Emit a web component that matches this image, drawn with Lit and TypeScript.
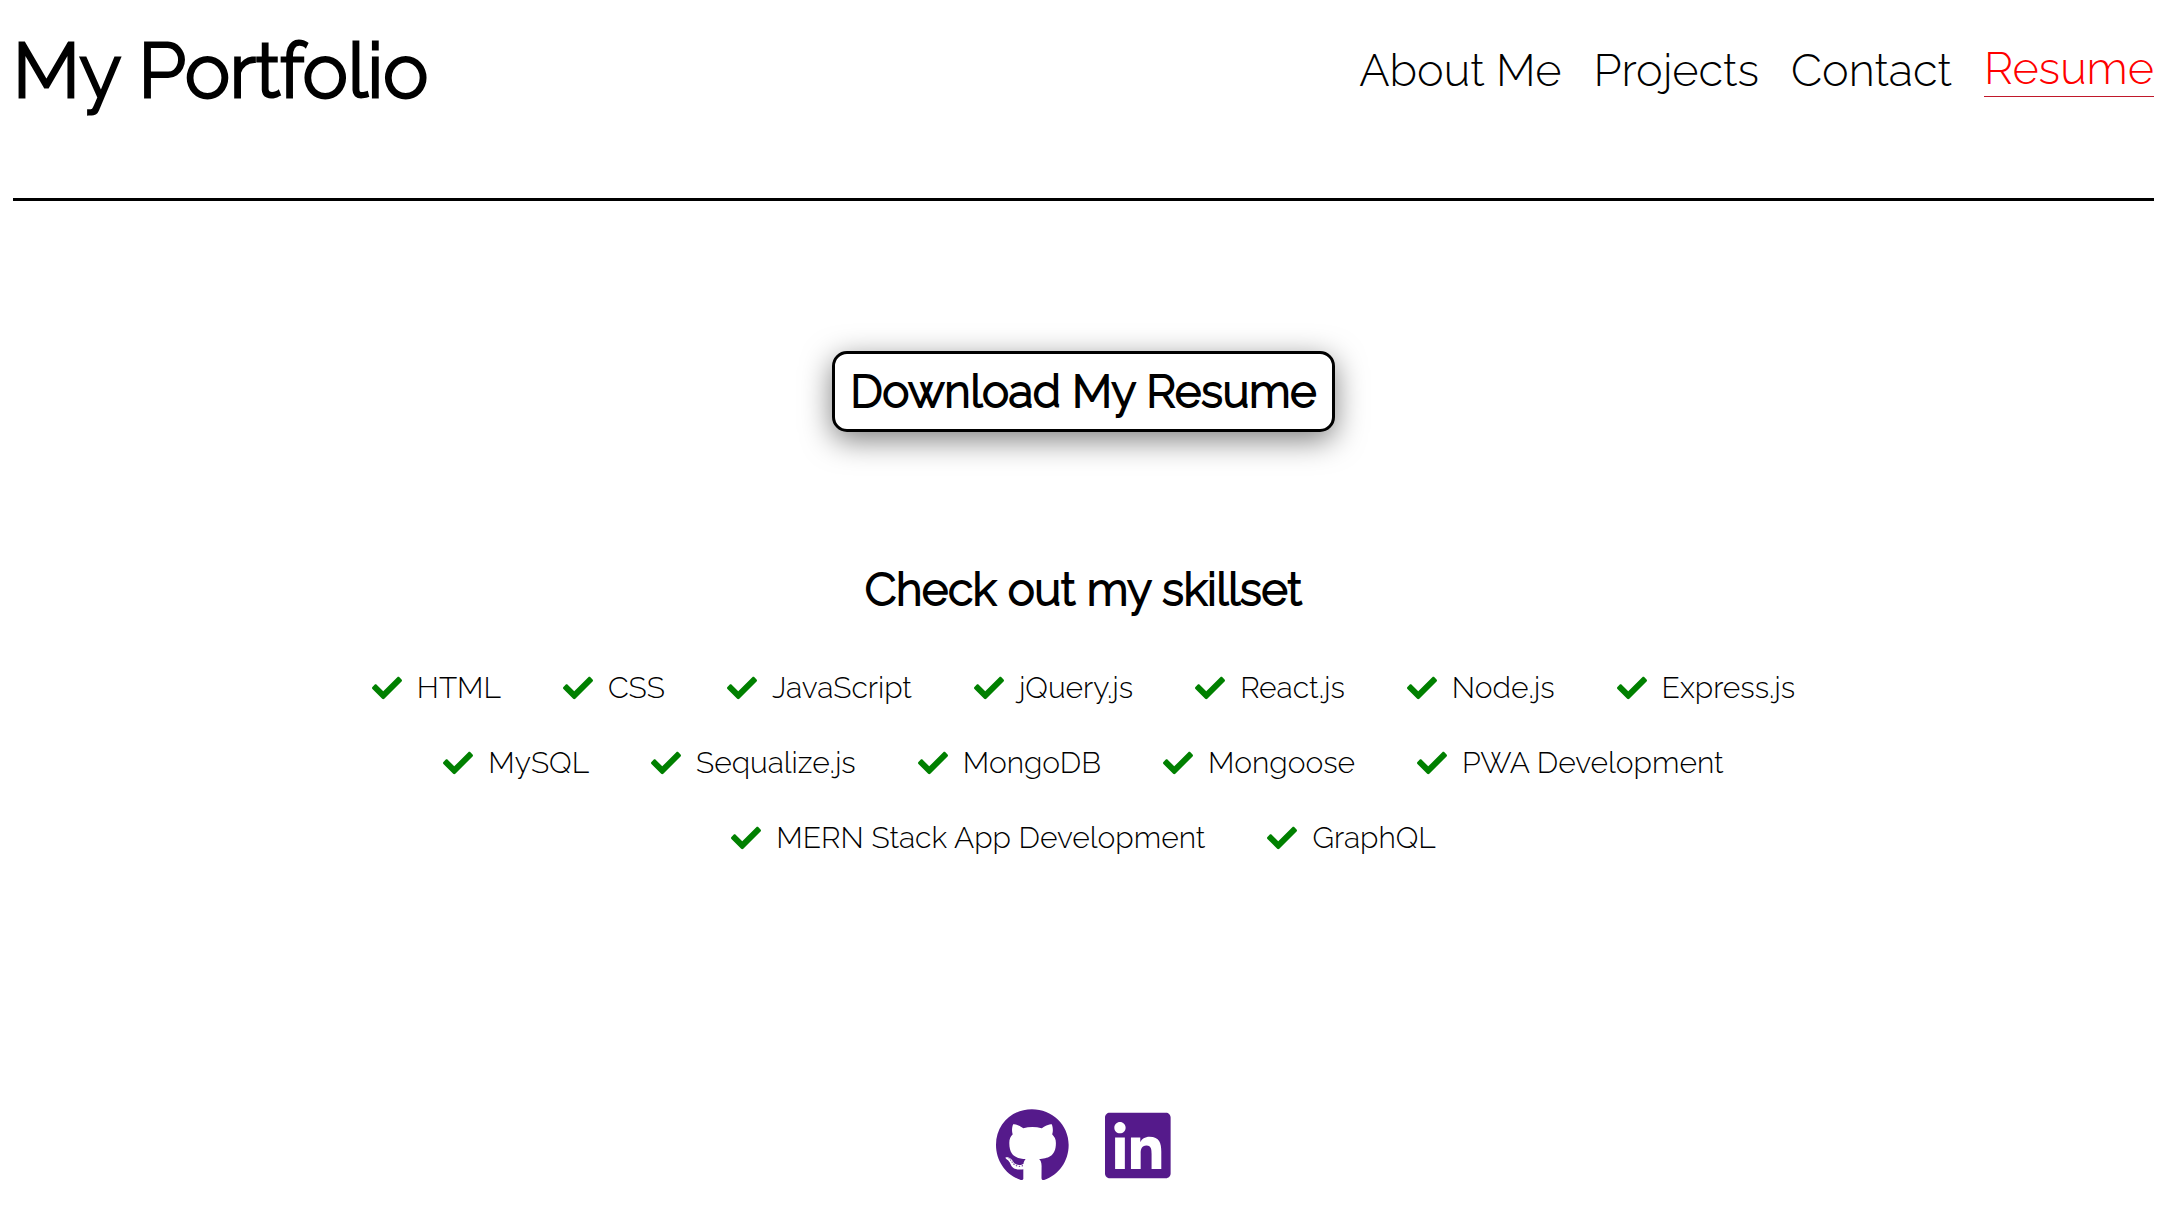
import { LitElement, html, css, svg } from "lit";
import { customElement } from "lit/decorators.js";

const CHECK = svg`<path d="M173.898 439.404l-166.4-166.4c-9.997-9.997-9.997-26.206 0-36.204l36.203-36.204c9.997-9.998 26.207-9.998 36.204 0L192 312.69 432.095 72.596c9.997-9.997 26.207-9.997 36.204 0l36.203 36.204c9.997 9.997 9.997 26.206 0 36.204l-294.4 294.401c-9.998 9.997-26.207 9.997-36.204-.001z"/>`;

const GITHUB = svg`<path d="M165.9 397.4c0 2-2.3 3.6-5.2 3.6-3.3.3-5.6-1.3-5.6-3.6 0-2 2.3-3.6 5.2-3.6 3-.3 5.6 1.3 5.6 3.6zm-31.1-4.5c-.7 2 1.3 4.3 4.3 4.9 2.6 1 5.6 0 6.2-2s-1.3-4.3-4.3-5.2c-2.6-.7-5.5.3-6.2 2.3zm44.2-1.7c-2.9.7-4.9 2.6-4.6 4.9.3 2 2.9 3.3 5.9 2.6 2.9-.7 4.9-2.6 4.6-4.6-.3-1.9-3-3.2-5.9-2.9zM244.8 8C106.1 8 0 113.3 0 252c0 110.9 69.8 205.8 169.5 239.2 12.8 2.3 17.3-5.6 17.3-12.1 0-6.2-.3-40.4-.3-61.4 0 0-70 15-84.7-29.8 0 0-11.4-29.1-27.8-36.6 0 0-22.9-15.7 1.6-15.4 0 0 24.9 2 38.6 25.8 21.9 38.6 58.6 27.5 72.9 20.9 2.3-16 8.8-27.1 16-33.7-55.9-6.2-112.3-14.3-112.3-110.5 0-27.5 7.6-41.3 23.6-58.9-2.6-6.5-11.1-33.3 2.6-67.9 20.9-6.5 69 27 69 27 20-5.6 41.5-8.5 62.8-8.5s42.8 2.9 62.8 8.5c0 0 48.1-33.6 69-27 13.7 34.7 5.2 61.4 2.6 67.9 16 17.7 25.8 31.5 25.8 58.9 0 96.5-58.9 104.2-114.8 110.5 9.2 7.9 17 22.9 17 46.4 0 33.7-.3 75.4-.3 83.6 0 6.5 4.6 14.4 17.3 12.1C428.2 457.8 496 362.9 496 252 496 113.3 383.5 8 244.8 8zM97.2 352.9c-1.3 1-1 3.3.7 5.2 1.6 1.6 3.9 2.3 5.2 1 1.3-1 1-3.3-.7-5.2-1.6-1.6-3.9-2.3-5.2-1zm-10.8-8.1c-.7 1.3.3 2.9 2.3 3.9 1.6 1 3.6.7 4.3-.7.7-1.3-.3-2.9-2.3-3.9-2-.6-3.6-.3-4.3.7zm32.4 35.6c-1.6 1.3-1 4.3 1.3 6.2 2.3 2.3 5.2 2.6 6.5 1 1.3-1.3.7-4.3-1.3-6.2-2.2-2.3-5.2-2.6-6.5-1zm-11.4-14.7c-1.6 1-1.6 3.6 0 5.9 1.6 2.3 4.3 3.3 5.6 2.3 1.6-1.3 1.6-3.9 0-6.2-1.4-2.3-4-3.3-5.6-2z"/>`;

const LINKEDIN = svg`<path d="M416 32H31.9C14.3 32 0 46.5 0 64.3v383.4C0 465.5 14.3 480 31.9 480H416c17.6 0 32-14.5 32-32.3V64.3c0-17.8-14.4-32.3-32-32.3zM135.4 416H69V202.2h66.5V416zm-33.2-243c-21.3 0-38.5-17.3-38.5-38.5S80.9 96 102.2 96c21.2 0 38.5 17.3 38.5 38.5 0 21.3-17.2 38.5-38.5 38.5zm282.1 243h-66.4V312c0-24.8-.5-56.7-34.5-56.7-34.6 0-39.9 27-39.9 54.9V416h-66.4V202.2h63.7v29.2h.9c8.9-16.8 30.6-34.5 62.9-34.5 67.2 0 79.7 44.3 79.7 101.9V416z"/>`;

const SKILLS = [
  "HTML",
  "CSS",
  "JavaScript",
  "jQuery.js",
  "React.js",
  "Node.js",
  "Express.js",
  "MySQL",
  "Sequalize.js",
  "MongoDB",
  "Mongoose",
  "PWA Development",
  "MERN Stack App Development",
  "GraphQL",
];

@customElement("app-root")
export class AppRoot extends LitElement {
  static styles = css`
    :host {
      display: block;
      box-sizing: border-box;
      padding: 0 29px 0 13px;
      background: #fff;
      color: #000;
      font-family: Raleway, Lato, sans-serif;
      font-weight: 300;
    }
    .header {
      display: flex;
      justify-content: space-between;
      align-items: flex-start;
      height: 198px;
      border-bottom: 3px solid #000;
    }
    .title {
      margin: 0;
      padding-top: 23px;
      font-size: 76px;
      line-height: 96px;
      font-weight: 300;
      -webkit-text-stroke: 3px #000;
    }
    .nav {
      display: flex;
      align-items: center;
      gap: 32px;
      padding-top: 44px;
      font-size: 45px;
      line-height: 54px;
    }
    .nav a {
      color: inherit;
      text-decoration: none;
    }
    .nav .active {
      padding-bottom: 3px;
      border-bottom: 1px solid #c0182b;
      line-height: 48px;
      color: #f00;
    }
    .main {
      display: flex;
      flex-direction: column;
      align-items: center;
      padding-top: 150px;
    }
    .download {
      padding: 10px 15px;
      border: 3px solid #000;
      border-radius: 15px;
      background: #fff;
      color: #000;
      font: inherit;
      font-size: 45px;
      line-height: 55px;
      font-weight: 300;
      -webkit-text-stroke: 2px #000;
      box-shadow: 0 8px 30px rgba(0, 0, 0, 0.5);
    }
    .subtitle {
      margin: 131px 0 0;
      font-size: 45px;
      line-height: 54px;
      font-weight: 300;
      -webkit-text-stroke: 2px #000;
    }
    .skills {
      display: flex;
      flex-wrap: wrap;
      justify-content: center;
      gap: 39px 62px;
      width: 70%;
      margin: 53px 0 0;
      padding: 0;
      list-style: none;
      font-size: 30px;
      line-height: 36px;
    }
    .skill {
      display: flex;
      align-items: center;
      gap: 15px;
    }
    .check {
      width: 30px;
      height: 30px;
      fill: #008000;
    }
    .footer {
      display: flex;
      justify-content: center;
      gap: 36px;
      padding: 252px 0 21px;
    }
    .footer a {
      display: block;
      color: #551a8b;
    }
    .brand {
      display: block;
      height: 75px;
      fill: currentColor;
    }
  `;

  render() {
    return html`
      <header class="header">
        <h1 class="title">My Portfolio</h1>
        <nav class="nav">
          <a href="#about">About Me</a>
          <a href="#projects">Projects</a>
          <a href="#contact">Contact</a>
          <a class="active" href="#resume" aria-current="page">Resume</a>
        </nav>
      </header>
      <main class="main">
        <button class="download" type="button">Download My Resume</button>
        <h2 class="subtitle">Check out my skillset</h2>
        <ul class="skills">
          ${SKILLS.map(
            (skill) => html`<li class="skill">
              <svg class="check" viewBox="0 0 512 512" aria-hidden="true">${CHECK}</svg>
              <span>${skill}</span>
            </li>`
          )}
        </ul>
      </main>
      <footer class="footer">
        <a href="#github" aria-label="GitHub">
          <svg class="brand" viewBox="0 0 496 512" aria-hidden="true">${GITHUB}</svg>
        </a>
        <a href="#linkedin" aria-label="LinkedIn">
          <svg class="brand" viewBox="0 0 448 512" aria-hidden="true">${LINKEDIN}</svg>
        </a>
      </footer>
    `;
  }
}
